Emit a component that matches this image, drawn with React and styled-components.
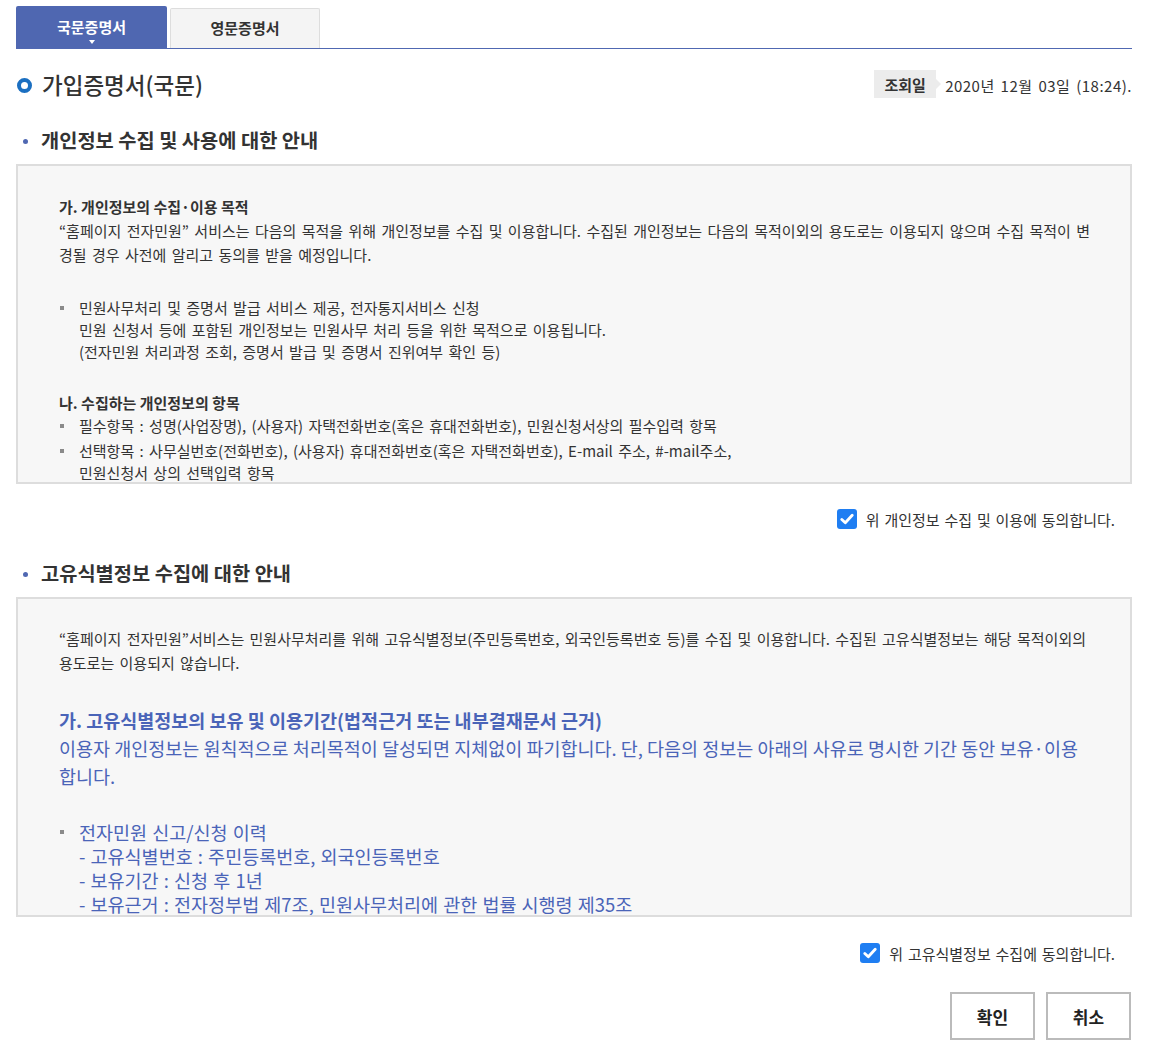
import React, { useState } from "react";
import styled, { createGlobalStyle } from "styled-components";

const GlobalStyle = createGlobalStyle`
    body {
        margin: 0;
        background: #fff;
        font-family: "Noto Sans CJK KR", "Noto Sans", sans-serif;
        color: #333;
    }
`;

const StyledPage = styled.div`
    width: 1116px;
    padding: 6px 18px 14px 16px;
`;

const StyledTabs = styled.div`
    display: flex;
    align-items: flex-end;
    gap: 3px;
    border-bottom: 1px solid #5068b2;
`;

const StyledTab = styled.button`
    position: relative;
    width: ${(p) => (p.$active ? "151px" : "150px")};
    height: ${(p) => (p.$active ? "42px" : "40px")};
    border: ${(p) => (p.$active ? "none" : "1px solid #ddd")};
    border-bottom: none;
    border-radius: 2px 2px 0 0;
    background: ${(p) => (p.$active ? "#4f67b1" : "#f4f4f4")};
    color: ${(p) => (p.$active ? "#fff" : "#333")};
    font-family: inherit;
    font-size: 15px;
    font-weight: 700;
    padding: 0 0 2px;
    cursor: pointer;
    &::after {
        content: "";
        display: ${(p) => (p.$active ? "block" : "none")};
        position: absolute;
        left: 50%;
        bottom: 4px;
        margin-left: -3px;
        border-left: 3px solid transparent;
        border-right: 3px solid transparent;
        border-top: 4px solid #fff;
    }
`;

const StyledTitleRow = styled.div`
    display: flex;
    align-items: center;
    justify-content: space-between;
    height: 28px;
    margin-top: 21px;
`;

const StyledTitle = styled.h2`
    display: flex;
    align-items: center;
    gap: 10px;
    margin: 0;
    font-size: 22.5px;
    line-height: 28px;
    font-weight: 500;
    color: #333;
    &::before {
        content: "";
        width: 7px;
        height: 7px;
        margin: 3px 0 0 1px;
        border: 4px solid #1b6fc1;
        border-radius: 50%;
    }
`;

const StyledDateWrap = styled.div`
    display: flex;
    align-items: center;
    gap: 9px;
    font-size: 15px;
    color: #333;
`;

const StyledDate = styled.span`
    letter-spacing: 0.5px;
    word-spacing: 2px;
    padding-top: 2px;
`;

const StyledBadge = styled.span`
    position: relative;
    display: inline-flex;
    align-items: center;
    justify-content: center;
    width: 62px;
    height: 28px;
    background: #ececec;
    font-weight: 700;
    &::after {
        content: "";
        position: absolute;
        right: -5px;
        top: 50%;
        margin-top: -5px;
        border-top: 5px solid transparent;
        border-bottom: 5px solid transparent;
        border-left: 5px solid #ececec;
    }
`;

const StyledSectionTitle = styled.h3`
    display: flex;
    align-items: center;
    gap: 13px;
    margin: ${(p) => p.$top} 0 12px;
    padding-left: 7px;
    font-size: 19.8px;
    line-height: 24px;
    font-weight: 700;
    color: #333;
    &::before {
        content: "";
        width: 5px;
        height: 5px;
        margin-top: 2px;
        border-radius: 50%;
        background: #5068b2;
    }
`;

const StyledBox = styled.div`
    overflow: hidden;
    border: 2px solid #dddddd;
    background: #f7f7f7;
    padding: ${(p) => p.$padTop}px 38px 0 41px;
    height: ${(p) => 316 - p.$padTop}px;
`;

const StyledSubTitle = styled.p`
    margin: ${(p) => p.$top || "0"} 0 0;
    font-size: 15px;
    line-height: 24px;
    font-weight: 700;
    color: #333;
`;

const StyledText = styled.p`
    margin: 0;
    font-size: 15px;
    line-height: 24px;
    word-spacing: 2px;
    color: #333;
`;

const StyledList = styled.ul`
    list-style: none;
    margin: ${(p) => p.$top || "0"} 0 0;
    padding: 0;
    font-size: ${(p) => (p.$blue ? "18.5px" : "15px")};
    line-height: ${(p) => (p.$blue ? "24px" : "22px")};
    word-spacing: ${(p) => (p.$blue ? "1px" : "2px")};
    color: ${(p) => (p.$blue ? "#4a64b8" : "#333")};
`;

const StyledItem = styled.li`
    position: relative;
    padding-left: 20px;
    margin-top: ${(p) => p.$gap || "0"};
    &::before {
        content: "";
        position: absolute;
        left: 1px;
        top: ${(p) => (p.$blue ? "10px" : "9px")};
        width: 4px;
        height: 4px;
        background: #8a8a8a;
    }
`;

const StyledBlueTitle = styled.p`
    margin: 31px 0 0;
    font-size: 18.5px;
    line-height: 28px;
    font-weight: 700;
    color: #4a64b8;
`;

const StyledBlueText = styled.p`
    margin: 0;
    font-size: 18.5px;
    line-height: 28px;
    color: #4a64b8;
`;

const StyledAgreeRow = styled.label`
    display: flex;
    align-items: center;
    justify-content: flex-end;
    gap: 9px;
    height: 20px;
    margin-top: ${(p) => p.$top};
    padding-right: 17px;
    font-size: 15px;
    word-spacing: 1.5px;
    color: #333;
    cursor: pointer;
`;

const StyledCheck = styled.span`
    display: inline-flex;
    align-items: center;
    justify-content: center;
    width: 20px;
    height: 20px;
    border-radius: 3px;
    background: ${(p) => (p.$checked ? "#1f7ef2" : "#fff")};
    border: ${(p) => (p.$checked ? "none" : "1px solid #999")};
    box-sizing: border-box;
`;

const StyledHiddenInput = styled.input`
    display: none;
`;

const StyledButtons = styled.div`
    display: flex;
    justify-content: flex-end;
    gap: 11px;
    margin-top: 29px;
    padding-right: 1px;
`;

const StyledButton = styled.button`
    width: 85px;
    height: 48px;
    border: 2px solid #bbb;
    background: #fff;
    font-family: inherit;
    font-size: 17px;
    font-weight: 700;
    color: #222;
    cursor: pointer;
`;

const CheckIcon = () => (
    <svg width="14" height="12" viewBox="0 0 14 12">
        <path
            d="M1.8 6.4 L5.3 9.8 L12.2 2.2"
            fill="none"
            stroke="#fff"
            strokeWidth="2.8"
            strokeLinecap="round"
            strokeLinejoin="round"
        />
    </svg>
);

const AgreeCheck = ({ top, label }) => {
    const [checked, setChecked] = useState(true);
    return (
        <StyledAgreeRow $top={top}>
            <StyledHiddenInput
                type="checkbox"
                checked={checked}
                onChange={() => setChecked(!checked)}
            />
            <StyledCheck $checked={checked}>{checked && <CheckIcon />}</StyledCheck>
            {label}
        </StyledAgreeRow>
    );
};

const App = () => {
    const [tab, setTab] = useState(0);

    return (
        <StyledPage>
            <GlobalStyle />
            <StyledTabs>
                {["국문증명서", "영문증명서"].map((name, i) => (
                    <StyledTab key={name} $active={tab === i} onClick={() => setTab(i)}>
                        {name}
                    </StyledTab>
                ))}
            </StyledTabs>

            <StyledTitleRow>
                <StyledTitle>가입증명서(국문)</StyledTitle>
                <StyledDateWrap>
                    <StyledBadge>조회일</StyledBadge>
                    <StyledDate>2020년 12월 03일 (18:24).</StyledDate>
                </StyledDateWrap>
            </StyledTitleRow>

            <StyledSectionTitle $top="30px">개인정보 수집 및 사용에 대한 안내</StyledSectionTitle>
            <StyledBox $padTop={29}>
                <StyledSubTitle>가. 개인정보의 수집·이용 목적</StyledSubTitle>
                <StyledText>
                    “홈페이지 전자민원” 서비스는 다음의 목적을 위해 개인정보를 수집 및 이용합니다. 수집된
                    개인정보는 다음의 목적이외의 용도로는 이용되지 않으며 수집 목적이 변경될 경우 사전에
                    알리고 동의를 받을 예정입니다.
                </StyledText>
                <StyledList $top="30px">
                    <StyledItem>
                        민원사무처리 및 증명서 발급 서비스 제공, 전자통지서비스 신청
                        <br />
                        민원 신청서 등에 포함된 개인정보는 민원사무 처리 등을 위한 목적으로 이용됩니다.
                        <br />
                        (전자민원 처리과정 조회, 증명서 발급 및 증명서 진위여부 확인 등)
                    </StyledItem>
                </StyledList>
                <StyledSubTitle $top="28px">나. 수집하는 개인정보의 항목</StyledSubTitle>
                <StyledList>
                    <StyledItem>
                        필수항목 : 성명(사업장명), (사용자) 자택전화번호(혹은 휴대전화번호), 민원신청서상의
                        필수입력 항목
                    </StyledItem>
                    <StyledItem $gap="3px">
                        선택항목 : 사무실번호(전화번호), (사용자) 휴대전화번호(혹은 자택전화번호), E-mail 주소,
                        #-mail주소,
                        <br />
                        민원신청서 상의 선택입력 항목
                    </StyledItem>
                </StyledList>
            </StyledBox>
            <AgreeCheck top="25px" label="위 개인정보 수집 및 이용에 동의합니다." />

            <StyledSectionTitle $top="32px">고유식별정보 수집에 대한 안내</StyledSectionTitle>
            <StyledBox $padTop={28}>
                <StyledText>
                    “홈페이지 전자민원”서비스는 민원사무처리를 위해 고유식별정보(주민등록번호, 외국인등록번호
                    등)를 수집 및 이용합니다. 수집된 고유식별정보는 해당 목적이외의 용도로는 이용되지 않습니다.
                </StyledText>
                <StyledBlueTitle>가. 고유식별정보의 보유 및 이용기간(법적근거 또는 내부결재문서 근거)</StyledBlueTitle>
                <StyledBlueText>
                    이용자 개인정보는 원칙적으로 처리목적이 달성되면 지체없이 파기합니다. 단, 다음의 정보는
                    아래의 사유로 명시한 기간 동안 보유·이용합니다.
                </StyledBlueText>
                <StyledList $blue $top="30px">
                    <StyledItem $blue>
                        전자민원 신고/신청 이력
                        <br />- 고유식별번호 : 주민등록번호, 외국인등록번호
                        <br />- 보유기간 : 신청 후 1년
                        <br />- 보유근거 : 전자정부법 제7조, 민원사무처리에 관한 법률 시행령 제35조
                    </StyledItem>
                </StyledList>
            </StyledBox>
            <AgreeCheck top="26px" label="위 고유식별정보 수집에 동의합니다." />

            <StyledButtons>
                <StyledButton>확인</StyledButton>
                <StyledButton>취소</StyledButton>
            </StyledButtons>
        </StyledPage>
    );
};

export default App;
